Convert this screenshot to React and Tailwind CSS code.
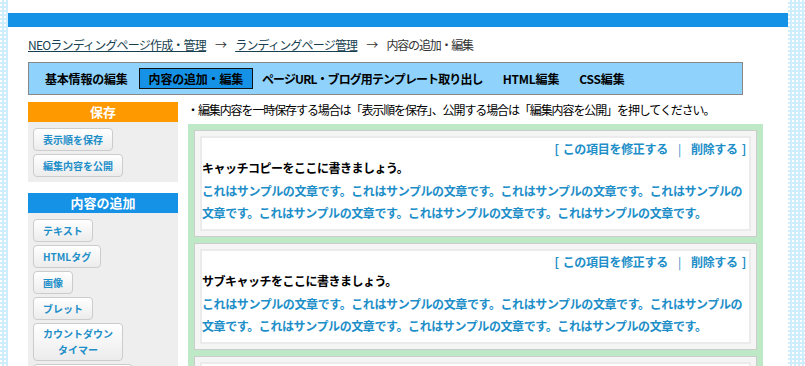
const jp = "font-['Noto_Sans_CJK_JP','Noto_Sans',sans-serif]";

const tabs = [
  { label: "基本情報の編集", cls: "ml-[16px]" },
  { label: "内容の追加・編集", cls: "ml-[11px]", active: true },
  { label: "ページURL・ブログ用テンプレート取り出し", cls: "ml-[9px] tracking-[-0.9px]" },
  { label: "HTML編集", cls: "ml-[20px]" },
  { label: "CSS編集", cls: "ml-[20px]" },
];

const addButtons = ["テキスト", "HTMLタグ", "画像", "ブレット"];

const cards = [
  "キャッチコピーをここに書きましょう。",
  "サブキャッチをここに書きましょう。",
];

const line1 = "これはサンプルの文章です。これはサンプルの文章です。これはサンプルの文章です。これはサンプルの";
const line2 = "文章です。これはサンプルの文章です。これはサンプルの文章です。これはサンプルの文章です。";

function SideButton({ children, multi }) {
  return (
    <button
      className={`block rounded-[4px] border border-[#cccccc] bg-gradient-to-b from-white to-[#ececec] px-[9px] text-center text-[10px] font-bold text-[#1d8ec8] ${
        multi ? "py-[2px] leading-[16px]" : "leading-[21px]"
      }`}
    >
      {children}
    </button>
  );
}

function Card({ title }) {
  return (
    <div className="border border-[#cccccc] bg-[#f5f5f5] p-[5px]">
      <div className="border-2 border-[#ebebeb] bg-white pb-[5px]">
        <div className="flex justify-end pr-[3px] text-[12px] font-bold leading-[21px] tracking-[-0.3px] text-[#1d8ec8]">
          <span>[</span>
          <span className="ml-[4px]">この項目を修正する</span>
          <span className="mx-[10px] font-normal">|</span>
          <span>削除する</span>
          <span className="ml-[4px]">]</span>
        </div>
        <div className="text-[12px] font-bold leading-[18px] tracking-[-0.5px] text-black">{title}</div>
        <div className="mt-[3px] whitespace-nowrap text-[12px] font-bold leading-[22px] tracking-[-0.4px] text-[#1d8ec8]">
          <div>{line1}</div>
          <div>{line2}</div>
        </div>
      </div>
    </div>
  );
}

export default function App() {
  return (
    <div
      className={`h-[366px] w-[805px] overflow-hidden bg-[#cfeefd] bg-[linear-gradient(90deg,transparent_2px,#cfeefd_2px),linear-gradient(#ffffff_2px,#cfeefd_2px)] bg-[length:4px_4px] ${jp}`}
    >
      <div className="ml-[8px] h-full w-[780px] bg-white pt-[13px]">
        <div className="h-[14px] bg-[#1592e6]" />
        <div className="px-[20px]">
          {/* breadcrumb */}
          <div className="mt-[10px] flex items-center text-[12px] leading-[16px] tracking-[-0.8px] text-[#333]">
            <a className="text-[#173f4f] underline">NEOランディングページ作成・管理</a>
            <span className="mx-[9px] text-[#333]">→</span>
            <a className="text-[#173f4f] underline">ランディングページ管理</a>
            <span className="mx-[9px] text-[#333]">→</span>
            <span className="tracking-[-1.2px]">内容の追加・編集</span>
          </div>

          {/* tabs */}
          <div className="mt-[9px] flex h-[33px] w-[715px] items-center border border-[#888888] bg-[#8fd3fd] text-[12px] font-bold tracking-[-0.2px] text-black">
            {tabs.map((t) =>
              t.active ? (
                <div
                  key={t.label}
                  className={`${t.cls} border border-[#111] bg-[#1592e6] px-[9px] leading-[19px]`}
                >
                  {t.label}
                </div>
              ) : (
                <div key={t.label} className={t.cls}>
                  {t.label}
                </div>
              )
            )}
          </div>

          <div className="mt-[7px] flex">
            {/* sidebar */}
            <div className="w-[150px] shrink-0">
              <div className="h-[20px] bg-[#ff9900] text-center text-[13px] font-bold leading-[20px] text-white">保存</div>
              <div className="flex flex-col items-start gap-[3px] bg-[#eeeeee] px-[5px] pb-[5px] pt-[6px]">
                <SideButton>表示順を保存</SideButton>
                <SideButton>編集内容を公開</SideButton>
              </div>
              <div className="mt-[11px] h-[20px] bg-[#1592e6] text-center text-[13px] font-bold leading-[20px] text-white">
                内容の追加
              </div>
              <div className="flex h-[200px] flex-col items-start gap-[3px] bg-[#eeeeee] px-[5px] pt-[6px]">
                {addButtons.map((b) => (
                  <SideButton key={b}>{b}</SideButton>
                ))}
                <SideButton multi>
                  カウントダウン
                  <br />
                  タイマー
                </SideButton>
                <div className="h-[23px] w-[100px] rounded-[4px] border border-[#cccccc] bg-gradient-to-b from-white to-[#ececec]" />
              </div>
            </div>

            {/* main */}
            <div className="ml-[9px] w-[576px]">
              <div className="whitespace-nowrap text-[12px] leading-[16px] tracking-[-1.1px] text-black">
                ・編集内容を一時保存する場合は「表示順を保存」、公開する場合は「編集内容を公開」を押してください。
              </div>
              <div className="ml-[1px] mt-[6px] flex w-[575px] flex-col gap-[6px] bg-[#bde9c7] p-[6px]">
                {cards.map((c) => (
                  <Card key={c} title={c} />
                ))}
                <div className="h-[60px] border border-[#cccccc] bg-[#f5f5f5] p-[5px]">
                  <div className="h-full border-2 border-[#ebebeb] bg-white" />
                </div>
              </div>
            </div>
          </div>
        </div>
      </div>
    </div>
  );
}
